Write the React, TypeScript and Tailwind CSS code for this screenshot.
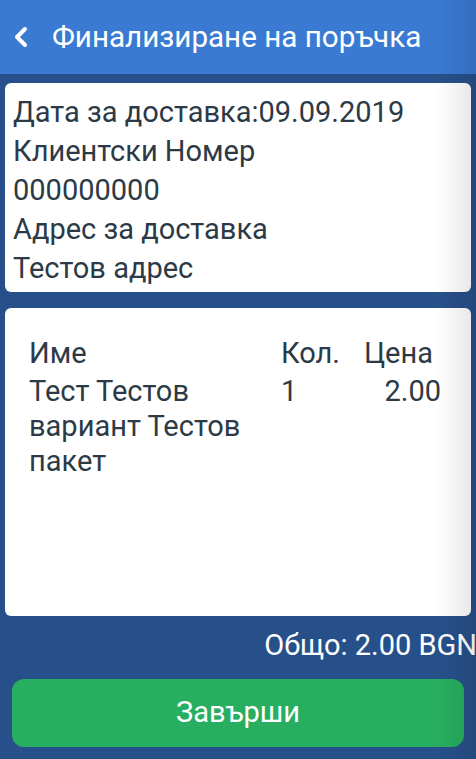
import { ChevronLeft } from "lucide-react";

const items = [{ name: "Тест Тестов вариант Тестов пакет", qty: 1, price: "2.00" }];

export default function App() {
  return (
    <div
      className="relative w-[476px] h-[759px] bg-[#27508a] flex flex-col overflow-hidden"
      style={{ fontFamily: "Roboto, 'Noto Sans', sans-serif" }}
    >
      <header className="h-[74px] bg-[#3a7ad3] flex items-center pl-[5px] gap-[15px] text-white">
        <ChevronLeft className="w-[32px] h-[32px]" strokeWidth={3} />
        <h1 className="text-[29.6px]">Финализиране на поръчка</h1>
      </header>

      <div className="mx-[5px] mt-[9px] bg-white rounded-[6px] px-[8px] pt-[10px] pb-[4px] text-[29px] leading-[39px] text-[#2c3a47]">
        <div>Дата за доставка:09.09.2019</div>
        <div>Клиентски Номер</div>
        <div>000000000</div>
        <div>Адрес за доставка</div>
        <div>Тестов адрес</div>
      </div>

      <div className="mx-[5px] mt-[16px] h-[308px] bg-white rounded-[6px] pl-[24px] pr-[30px] pt-[28px] text-[29px] leading-[35px] text-[#2c3a47]">
        <div className="grid grid-cols-[252px_60px_1fr] items-start">
          <div className="pb-[3px]">Име</div>
          <div>Кол.</div>
          <div className="text-right pr-[8px]">Цена</div>
          {items.map((item, i) => (
            <div key={i} className="contents">
              <div className="pr-[20px]">{item.name}</div>
              <div>{item.qty}</div>
              <div className="text-right">{item.price}</div>
            </div>
          ))}
        </div>
      </div>

      <div className="mt-[12px] text-right text-white text-[29px] leading-[34px] -mr-[1px]">Общо: 2.00 BGN</div>

      <button className="mx-[12px] mt-[17px] h-[68px] rounded-[12px] bg-[#27ae60] text-white text-[29px]">
        Завърши
      </button>

      <div className="pointer-events-none absolute top-0 right-0 w-[40px] h-full bg-gradient-to-r from-transparent to-black/10" />
    </div>
  );
}
